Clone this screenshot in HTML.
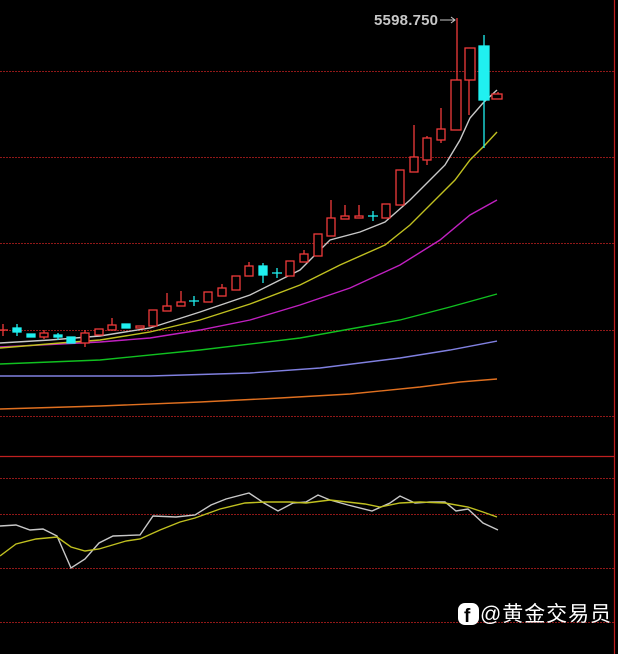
<!DOCTYPE html>
<html><head><meta charset="utf-8"><style>
html,body{margin:0;padding:0;background:#000;width:618px;height:654px;overflow:hidden}
svg{display:block}
</style></head><body>
<svg width="618" height="654" xmlns="http://www.w3.org/2000/svg">
<rect width="618" height="654" fill="#000"/>
<g stroke="#901818" stroke-width="1" stroke-dasharray="2,1">
<line x1="0" y1="71.5" x2="614" y2="71.5"/>
<line x1="0" y1="157.5" x2="614" y2="157.5"/>
<line x1="0" y1="243.5" x2="614" y2="243.5"/>
<line x1="0" y1="330.5" x2="614" y2="330.5"/>
<line x1="0" y1="416.5" x2="614" y2="416.5"/>
<line x1="0" y1="478.5" x2="614" y2="478.5"/>
<line x1="0" y1="514.5" x2="614" y2="514.5"/>
<line x1="0" y1="568.5" x2="614" y2="568.5"/>
<line x1="0" y1="622.5" x2="614" y2="622.5"/>
</g>
<line x1="0" y1="456.5" x2="614" y2="456.5" stroke="#c02020" stroke-width="1.2"/>
<line x1="614.5" y1="0" x2="614.5" y2="654" stroke="#c02020" stroke-width="1.2"/>
<g fill="none" stroke-width="1.4">
<polyline stroke="#e07020" points="0,409 100,406 200,402 280,398 350,394 420,387 460,382 497,379"/>
<polyline stroke="#8080e0" points="0,376 150,376 250,373 320,368 400,358 450,350 497,341"/>
<polyline stroke="#10c020" points="0,364 100,360 200,350 300,338 400,320 450,307 497,294"/>
<polyline stroke="#c020c0" points="0,347 100,342 150,338 200,330 250,320 300,305 350,288 400,265 440,240 470,215 497,200"/>
<polyline stroke="#c0c020" points="0,348 60,343 100,340 150,332 200,320 250,304 300,285 340,265 385,245 410,225 435,200 455,180 470,160 485,145 497,132"/>
<polyline stroke="#c8c8c8" points="0,343 50,340 100,336 150,328 200,312 250,295 300,270 330,240 360,232 385,222 410,200 430,180 445,165 460,140 470,118 483,103 497,90"/>
</g>
<g stroke-width="1.3">
<g stroke="#f03a3a" fill="#000">
<line x1="3" y1="324" x2="3" y2="336"/><line x1="-2" y1="330" x2="8" y2="330"/>
<line x1="44" y1="330" x2="44" y2="339"/><rect x="40" y="333" width="8" height="4"/>
<line x1="85" y1="330" x2="85" y2="347"/><rect x="81" y="333" width="8" height="10"/>
<rect x="95" y="329" width="8" height="6"/>
<line x1="112" y1="318" x2="112" y2="330"/><rect x="108" y="325" width="8" height="5"/>
<rect x="136" y="326" width="8" height="2"/>
<rect x="149" y="310" width="8" height="16"/>
<line x1="167" y1="293" x2="167" y2="311"/><rect x="163" y="306" width="8" height="5"/>
<line x1="181" y1="291" x2="181" y2="306"/><rect x="177" y="302" width="8" height="4"/>
<rect x="204" y="292" width="8" height="10"/>
<line x1="222" y1="284" x2="222" y2="296"/><rect x="218" y="288" width="8" height="8"/>
<rect x="232" y="276" width="8" height="14"/>
<line x1="249" y1="262" x2="249" y2="276"/><rect x="245" y="266" width="8" height="10"/>
<rect x="286" y="261" width="8" height="15"/>
<line x1="304" y1="250" x2="304" y2="262"/><rect x="300" y="254" width="8" height="8"/>
<rect x="314" y="234" width="8" height="22"/>
<line x1="331" y1="200" x2="331" y2="236"/><rect x="327" y="218" width="8" height="18"/>
<line x1="345" y1="205" x2="345" y2="219"/><rect x="341" y="216" width="8" height="3"/>
<line x1="359" y1="205" x2="359" y2="218"/><rect x="355" y="216" width="8" height="2"/>
<rect x="382" y="204" width="8" height="14"/>
<rect x="396" y="170" width="8" height="35"/>
<line x1="414" y1="125" x2="414" y2="172"/><rect x="410" y="157" width="8" height="15"/>
<line x1="427" y1="136" x2="427" y2="165"/><rect x="423" y="138" width="8" height="22"/>
<line x1="441" y1="108" x2="441" y2="143"/><rect x="437" y="129" width="8" height="11"/>
<line x1="457" y1="18" x2="457" y2="80"/><rect x="451" y="80" width="10" height="50"/>
<line x1="469" y1="80" x2="469" y2="115"/><rect x="465" y="48" width="10" height="32"/>
<line x1="498" y1="92" x2="498" y2="94"/><rect x="492" y="94" width="10" height="5"/>
</g>
<g stroke="#20f0f0" fill="#20f0f0">
<line x1="17" y1="324" x2="17" y2="336"/><rect x="13" y="328" width="8" height="4"/>
<rect x="27" y="334" width="8" height="3"/>
<line x1="58" y1="333" x2="58" y2="340"/><rect x="54" y="335" width="8" height="2"/>
<rect x="67" y="337" width="8" height="6"/>
<rect x="122" y="324" width="8" height="4"/>
<line x1="194" y1="296" x2="194" y2="306"/><line x1="189" y1="301" x2="199" y2="301"/>
<line x1="263" y1="263" x2="263" y2="283"/><rect x="259" y="266" width="8" height="9"/>
<line x1="277" y1="268" x2="277" y2="278"/><line x1="272" y1="273" x2="282" y2="273"/>
<line x1="373" y1="211" x2="373" y2="221"/><line x1="368" y1="216" x2="378" y2="216"/>
<line x1="484" y1="35" x2="484" y2="148"/><rect x="479" y="46" width="10" height="54"/>
</g>
</g>
<text x="374" y="25" font-family="Liberation Sans, sans-serif" font-size="15" font-weight="bold" fill="#c8c8c8" textLength="64">5598.750</text>
<line x1="440" y1="20" x2="455" y2="20" stroke="#c8c8c8" stroke-width="1"/>
<polyline points="451,17 455,20 451,23" fill="none" stroke="#c8c8c8" stroke-width="1"/>
<g fill="none" stroke-width="1.4">
<polyline stroke="#c8c8c8" points="0,526 16,525 30,530 43,529 57,536 71,568 85,559 99,543 113,536 140,535 153,516 176,517 195,515 211,505 226,499 249,493 264,503 278,511 293,503 306,502 318,495 330,500 348,505 372,511 390,503 400,496 415,503 430,502 445,502 456,511 468,509 483,523 498,530"/>
<polyline stroke="#c0c020" points="0,556 16,544 36,539 57,537 71,547 85,551 99,549 126,541 140,539 160,530 180,522 195,518 220,509 245,503 265,502 290,502 306,503 330,500 365,504 380,507 400,503 420,502 445,503 468,507 483,512 497,517"/>
</g>
<g>
<rect x="458" y="603" width="21" height="22" rx="7" fill="#fff"/>
<text x="464" y="622" font-family="Liberation Sans, sans-serif" font-size="19" font-weight="bold" fill="#000">f</text>
<text x="480" y="621" font-family="Liberation Sans, 'Noto Sans CJK SC', sans-serif" font-size="21" fill="#fff" textLength="131">@黄金交易员</text>
</g>
</svg>
</body></html>
